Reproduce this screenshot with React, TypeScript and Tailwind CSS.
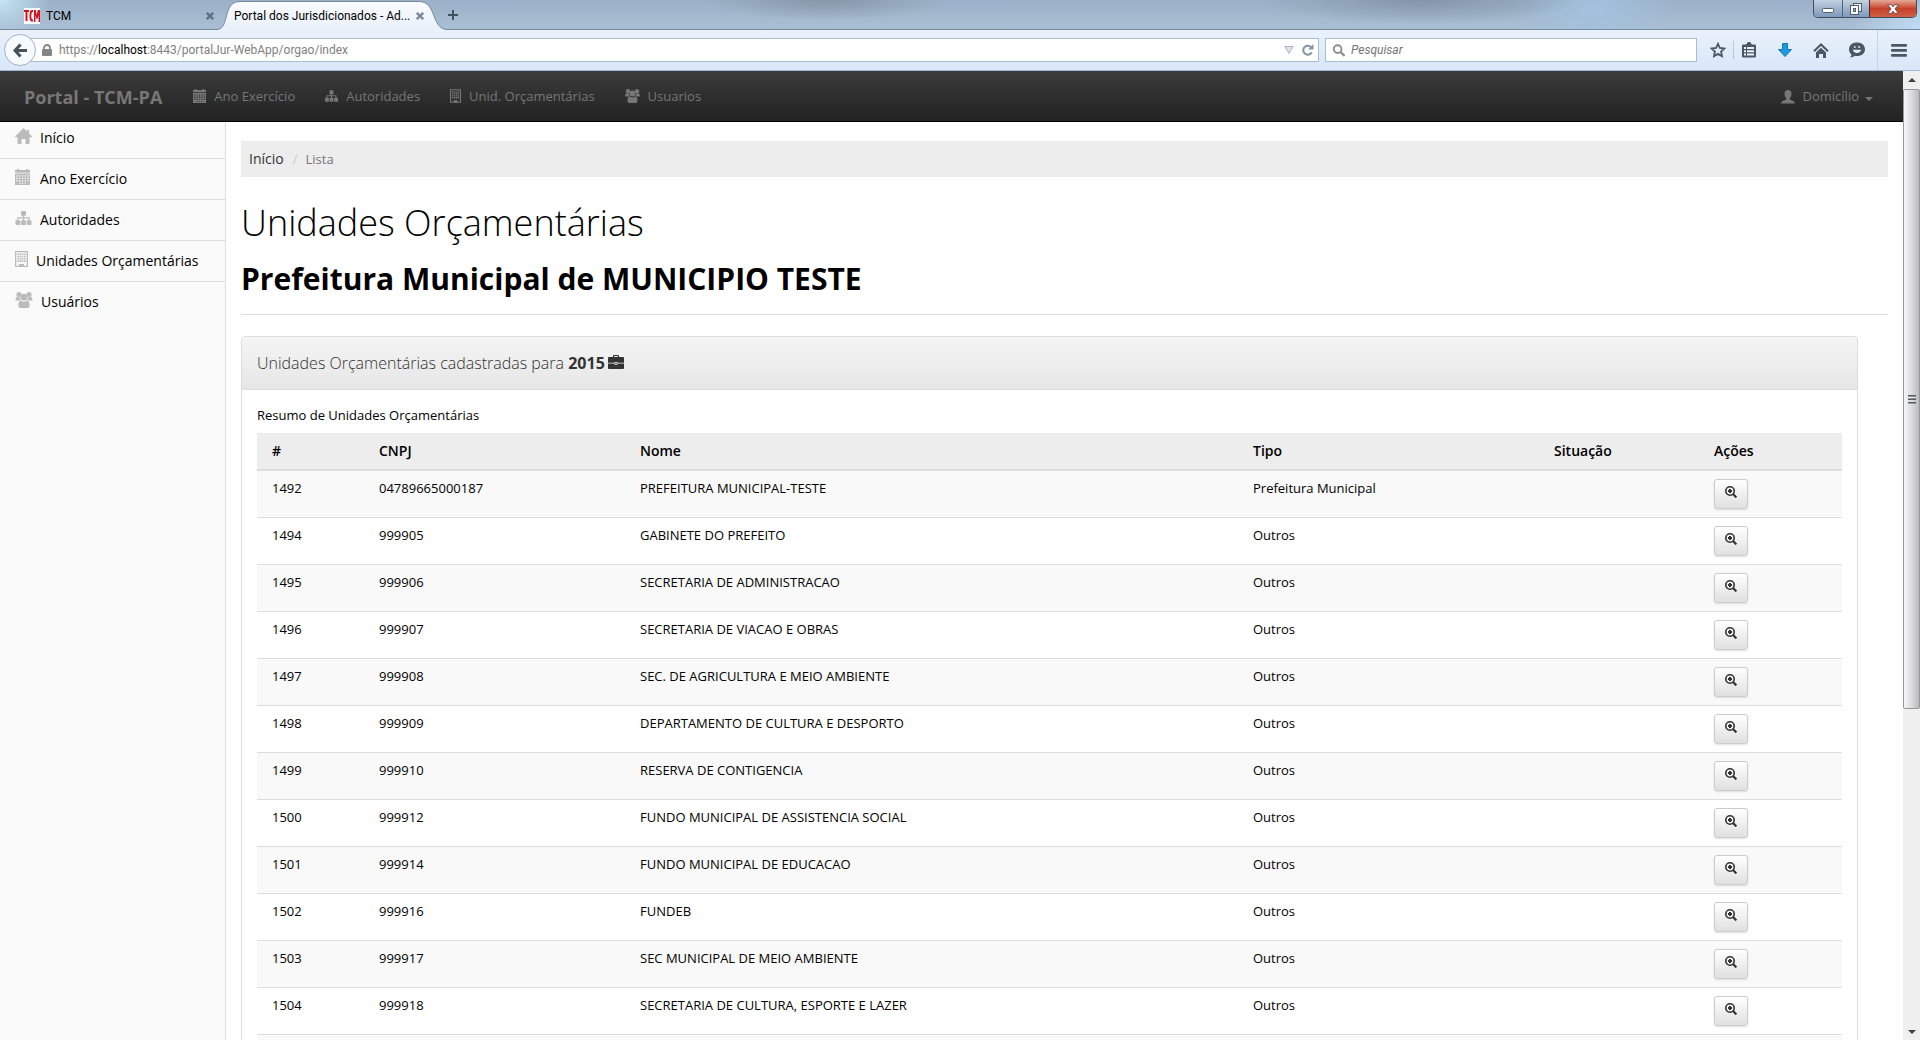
import { type ReactNode } from 'react';

interface IconProps {
  className?: string;
}

// ---- Icons --------------------------------------------------------------

function CalendarIcon({ className }: IconProps) {
  return (
    <svg viewBox="0 0 15 16" className={className} fill="currentColor" aria-hidden="true">
      <path d="M0 1h2V0h2v1h7V0h2v1h2v2.800H0z" />
      <path
        fillRule="evenodd"
        d="M0 4.600h15V16H0zM1.200 6.200v1.200h1.500V6.200zm2.800 0v1.200h1.500V6.200zm2.800 0v1.200h1.500V6.200zm2.800 0v1.200h1.500V6.200zm2.800 0v1.200h1.500V6.200zM1.200 8.700v1.200h1.500V8.700zm2.800 0v1.200h1.500V8.700zm2.800 0v1.200h1.500V8.700zm2.800 0v1.200h1.500V8.700zm2.800 0v1.200h1.500V8.700zM1.200 11.200v1.200h1.500v-1.200zm2.800 0v1.200h1.500v-1.200zm2.800 0v1.200h1.500v-1.200zm2.800 0v1.200h1.500v-1.200zm2.800 0v1.200h1.500v-1.200zM4 13.700v1h1.500v-1zm2.800 0v1h1.500v-1zm2.800 0v1h1.500v-1z"
      />
    </svg>
  );
}

function SitemapIcon({ className }: IconProps) {
  return (
    <svg viewBox="0 0 16 14" className={className} fill="currentColor" aria-hidden="true">
      <rect x="5.500" y="0" width="5" height="4.700" rx="0.700" />
      <rect x="0" y="9.300" width="4.800" height="4.700" rx="0.700" />
      <rect x="5.600" y="9.300" width="4.800" height="4.700" rx="0.700" />
      <rect x="11.200" y="9.300" width="4.800" height="4.700" rx="0.700" />
      <path d="M7.400 4h1.200v2.200h5.600V10H13V7.400H8.600V10H7.400V7.400H3V10H1.800V6.200h5.600z" />
    </svg>
  );
}

function BuildingIcon({ className }: IconProps) {
  return (
    <svg viewBox="0 0 13 16" className={className} fill="currentColor" aria-hidden="true">
      <path fillRule="evenodd" d="M0 0h13v16H0zM1.300 1.300v13.400H4V13h5v1.700h2.700V1.300z" />
      <path d="M4.800 13.500h3.400V16H4.800z" />
      {[2.4, 4.7, 7, 9.3].map((y) => (
        <path key={y} d={`M2.400 ${y}h1.600v1.600H2.400zm2.200 0h1.600v1.600H4.600zm2.200 0h1.600v1.600H6.800zm2.200 0h1.600v1.600H9z`} />
      ))}
    </svg>
  );
}

function GroupIcon({ className }: IconProps) {
  return (
    <svg viewBox="0 0 17 16" className={className} fill="currentColor" aria-hidden="true">
      <circle cx="3.400" cy="2.600" r="2.500" />
      <circle cx="13.600" cy="2.600" r="2.500" />
      <circle cx="8.500" cy="5.200" r="3.400" />
      <path d="M0 8.200C0 6 .8 4.800 2 4.800c1 .6 1.800.6 2.400.3C4.500 6.600 5 7.800 5.800 8.500H1.200C.5 8.500 0 8.500 0 8.200z" />
      <path d="M17 8.200c0-2.200-.8-3.400-2-3.400-1 .6-1.800.6-2.400.3-.1 1.500-.6 2.700-1.400 3.400h4.600c.7 0 1.200 0 1.200-.3z" />
      <path d="M2.800 13.500c0-2.500.7-4.800 2.700-4.800 2 1.400 4 1.400 6 0 2 0 2.700 2.300 2.700 4.800 0 1.600-.8 2.500-2.200 2.500H5c-1.400 0-2.200-.9-2.200-2.500z" />
    </svg>
  );
}

function HomeIcon({ className }: IconProps) {
  return (
    <svg viewBox="0 0 17 16" className={className} fill="currentColor" aria-hidden="true">
      <path d="M8.500 0 12 3.300V2h2v3.200l3 3.300-.4.700H14.500V16H10.500v-5h-4v5h-4V9.200H.4L0 8.500z" />
    </svg>
  );
}

function UserIcon({ className }: IconProps) {
  return (
    <svg viewBox="0 0 14 14" className={className} fill="currentColor" aria-hidden="true">
      <path d="M7 0c2.300 0 3.500 1.600 3.500 3.700 0 1.900-.8 3.600-1.700 4.500v1.200c1.500.9 5 1.300 5.200 4.200H0c.2-2.900 3.700-3.300 5.200-4.200V8.200C4.300 7.300 3.500 5.600 3.500 3.700 3.500 1.600 4.700 0 7 0z" />
    </svg>
  );
}

function BriefcaseIcon({ className }: IconProps) {
  return (
    <svg viewBox="0 0 16 14" className={className} fill="currentColor" aria-hidden="true">
      <path d="M5 2V.9C5 .3 5.300 0 5.900 0h4.200c.6 0 .9.300.9.900V2h3.800c.8 0 1.200.4 1.200 1.200V7.800H9.500V7h-3v.8H0V3.200C0 2.400.4 2 1.200 2zm1.200 0h3.600V1.100H6.200z" />
      <path d="M0 8.600h6.200c.2.900.8 1.300 1.800 1.300s1.600-.4 1.800-1.300H16v4.200c0 .8-.4 1.200-1.200 1.200H1.200C.4 14 0 13.600 0 12.800z" />
      <path d="M7 7.700h2v1H7z" />
    </svg>
  );
}

function ZoomInIcon({ className }: IconProps) {
  return (
    <svg viewBox="0 0 12 12" className={className} fill="none" stroke="currentColor" aria-hidden="true">
      <circle cx="5" cy="5" r="4.200" strokeWidth="1.600" />
      <path d="M8 8l3.400 3.400" strokeWidth="2.200" />
      <path d="M5 3v4M3 5h4" strokeWidth="2" />
    </svg>
  );
}

function CloseMark({ className }: IconProps) {
  return (
    <svg viewBox="0 0 8 8" className={className} fill="none" stroke="currentColor" strokeWidth="2.400" aria-hidden="true">
      <path d="M.8.8l6.400 6.400M7.200.8.8 7.200" />
    </svg>
  );
}

// ---- Data ---------------------------------------------------------------

const NAV_ITEMS: { label: string; icon: ReactNode }[] = [
  { label: 'Ano Exercício', icon: <CalendarIcon className="h-[14px] w-[13px]" /> },
  { label: 'Autoridades', icon: <SitemapIcon className="h-[12px] w-[13px]" /> },
  { label: 'Unid. Orçamentárias', icon: <BuildingIcon className="h-[14px] w-[11px]" /> },
  { label: 'Usuarios', icon: <GroupIcon className="h-[14px] w-[15px]" /> },
];

const SIDE_ITEMS: { label: string; icon: ReactNode }[] = [
  { label: 'Início', icon: <HomeIcon className="h-4 w-[17px]" /> },
  { label: 'Ano Exercício', icon: <CalendarIcon className="mr-0.5 h-4 w-[15px]" /> },
  { label: 'Autoridades', icon: <SitemapIcon className="h-[14px] w-[17px]" /> },
  { label: 'Unidades Orçamentárias', icon: <BuildingIcon className="h-4 w-[13px]" /> },
  { label: 'Usuários', icon: <GroupIcon className="h-4 w-[18px]" /> },
];

interface Unit {
  id: string;
  cnpj: string;
  name: string;
  type: string;
}

const UNITS: Unit[] = [
  { id: '1492', cnpj: '04789665000187', name: 'PREFEITURA MUNICIPAL-TESTE', type: 'Prefeitura Municipal' },
  { id: '1494', cnpj: '999905', name: 'GABINETE DO PREFEITO', type: 'Outros' },
  { id: '1495', cnpj: '999906', name: 'SECRETARIA DE ADMINISTRACAO', type: 'Outros' },
  { id: '1496', cnpj: '999907', name: 'SECRETARIA DE VIACAO E OBRAS', type: 'Outros' },
  { id: '1497', cnpj: '999908', name: 'SEC. DE AGRICULTURA E MEIO AMBIENTE', type: 'Outros' },
  { id: '1498', cnpj: '999909', name: 'DEPARTAMENTO DE CULTURA E DESPORTO', type: 'Outros' },
  { id: '1499', cnpj: '999910', name: 'RESERVA DE CONTIGENCIA', type: 'Outros' },
  { id: '1500', cnpj: '999912', name: 'FUNDO MUNICIPAL DE ASSISTENCIA SOCIAL', type: 'Outros' },
  { id: '1501', cnpj: '999914', name: 'FUNDO MUNICIPAL DE EDUCACAO', type: 'Outros' },
  { id: '1502', cnpj: '999916', name: 'FUNDEB', type: 'Outros' },
  { id: '1503', cnpj: '999917', name: 'SEC MUNICIPAL DE MEIO AMBIENTE', type: 'Outros' },
  { id: '1504', cnpj: '999918', name: 'SECRETARIA DE CULTURA, ESPORTE E LAZER', type: 'Outros' },
];

// ---- Browser frame ------------------------------------------------------

function TabStrip() {
  return (
    <div className="flex h-[30px] shrink-0 items-start border-b border-[#7289a0] bg-[radial-gradient(ellipse_50px_34px_at_0px_0px,#c4e6f5,transparent),radial-gradient(ellipse_70px_40px_at_100%_100%,#bfdcf5,transparent),radial-gradient(ellipse_120px_20px_at_43%_0px,#8697a8,transparent),radial-gradient(ellipse_160px_24px_at_74%_0px,#8496a8,transparent),radial-gradient(ellipse_80px_50px_at_83%_30%,#a2c2de,transparent),linear-gradient(#9bb0c8,#abbfd3)] text-[12px] leading-[30px] text-black">
      <button className="flex h-[30px] w-[217px] items-center pt-px pr-[3px] pl-6 text-left">
        <svg viewBox="0 0 16 16" className="h-4 w-4" aria-hidden="true">
          <rect width="16" height="16" fill="#fff" />
          <path d="M0 2h5v2H3.500v9h-2V4H0zM8 2C6 2 5.500 5 5.500 8S6 13.500 8 13.500h1v-2c-1.500 0-1.700-1.500-1.700-3.500s.2-4 1.700-4V2zM10 14V2h1.800l1 5 1-5H16v12h-1.500V7l-1 4h-1l-1-4v7z" fill="#d8101c" />
        </svg>
        <span className="ml-1.5 flex-1">TCM</span>
        <CloseMark className="h-2 w-2 text-[#61707f]" />
      </button>
      <button className="relative flex h-[30px] w-[230px] items-center pt-px pl-[17px] text-left">
        <svg viewBox="0 0 230 30" className="absolute inset-0 h-[30px] w-[230px]" aria-hidden="true">
          <defs>
            <linearGradient id="tabFill" x1="0" y1="0" x2="0" y2="1">
              <stop offset="0" stopColor="#fafcff" />
              <stop offset="1" stopColor="#e9f0fb" />
            </linearGradient>
          </defs>
          <path
            d="M0 29.500C13 29 5 1.500 23 1.500H202C220 1.500 214 29 230 29.500V30H0z"
            fill="url(#tabFill)"
          />
          <path d="M0 29.500C13 29 5 1.500 23 1.500H202C220 1.500 214 29 230 29.500" fill="none" stroke="#7289a0" />
        </svg>
        <span className="relative w-[182px] whitespace-nowrap">Portal dos Jurisdicionados - Ad...</span>
        <CloseMark className="relative h-2 w-2 text-[#7d8b98]" />
      </button>
      <button aria-label="Nova aba" className="flex h-[30px] w-3 items-center justify-center">
        <svg viewBox="0 0 10 10" className="h-2.5 w-2.5 shrink-0" stroke="#44525f" strokeWidth="2" aria-hidden="true">
          <path d="M5 0v10M0 5h10" />
        </svg>
      </button>
      <div className="mr-[3px] ml-auto flex h-[18px] overflow-hidden rounded-b-[5px] border border-t-0 border-[#3f4f63]">
        <button aria-label="Minimizar" className="flex w-7 items-end justify-center bg-linear-to-b from-[#c3d1e1] via-[#9fb4cd] to-[#7f9abb] pb-1">
          <svg viewBox="0 0 12 5" className="h-[5px] w-3" aria-hidden="true">
            <rect x=".5" y=".5" width="11" height="4" rx="1" fill="#fff" stroke="#4f5d70" />
          </svg>
        </button>
        <button aria-label="Restaurar" className="flex w-[27px] items-center justify-center border-l border-[#54657a] bg-linear-to-b from-[#c3d1e1] via-[#9fb4cd] to-[#7f9abb]">
          <svg viewBox="0 0 12 12" className="h-3 w-3" stroke="#4f5d70" aria-hidden="true">
            <rect x="3.500" y=".5" width="8" height="8" fill="#eee" />
            <rect x=".5" y="2.500" width="8" height="9" fill="#fff" />
            <rect x="3.500" y="5.500" width="2" height="3" fill="#a9b9cc" />
          </svg>
        </button>
        <button aria-label="Fechar" className="flex w-[47px] items-center justify-center border-l border-[#54262a] bg-linear-to-b from-[#e3a896] via-[#c7402a] to-[#cf5f45]">
          <svg viewBox="0 0 12 10" className="h-2.5 w-3" fill="#fff" stroke="#5b3a40" strokeWidth=".8" aria-hidden="true">
            <path d="M.6.6h3.400l2 2.200 2-2.200h3.400L8 5l3.400 4.400H8L6 7.200 4 9.400H.6L4 5z" />
          </svg>
        </button>
      </div>
    </div>
  );
}

function Toolbar() {
  return (
    <div className="flex h-[41px] shrink-0 items-center border-b border-[#9fbbd3] bg-linear-to-b from-[#e9f1fb] to-[#d9e7f8] pl-1 text-[12px] text-[#4b5864]">
      <button
        aria-label="Voltar"
        className="z-10 flex h-8 w-8 shrink-0 items-center justify-center rounded-full border border-[#9fb2c6] bg-[#f7fafe]"
      >
        <svg viewBox="0 0 14 14" className="h-[15px] w-[14px]" fill="none" stroke="#46525e" strokeWidth="3" aria-hidden="true">
          <path d="M7.500 1 2 7l5.500 6M2.500 7H14" />
        </svg>
      </button>
      <div className="-ml-1.5 flex h-6 flex-1 items-center border border-[#a9bdd2] bg-white pr-1 pl-[11px]">
        <svg viewBox="0 0 10 12" className="h-3 w-2.5" aria-hidden="true">
          <path d="M2 6V4a3 3 0 0 1 6 0v2" fill="none" stroke="#858585" strokeWidth="1.800" />
          <rect y="5" width="10" height="7" rx="1" fill="#858585" />
        </svg>
        <div className="ml-[7px] grid flex-1 items-center">
          <span className="col-start-1 row-start-1 text-[#808080]">
            https://<span className="text-black">localhost</span>:8443/portalJur-WebApp/orgao/index
          </span>
          <input aria-label="Endereço" className="col-start-1 row-start-1 w-full bg-transparent outline-none" />
        </div>
        <svg viewBox="0 0 10 8" className="mr-2 h-2 w-2.5" aria-hidden="true">
          <path d="M.8.500h8.400L5 7.500z" fill="#dce3ea" stroke="#a9b6c3" />
        </svg>
        <button aria-label="Recarregar">
          <svg viewBox="0 0 12 12" className="h-3 w-3" fill="none" stroke="#8494a5" strokeWidth="2" aria-hidden="true">
            <path d="M9.800 8.200A4.500 4.500 0 1 1 9 3" />
            <path d="M11.500 0v5.500H6z" fill="#8494a5" stroke="none" />
          </svg>
        </button>
      </div>
      <div className="ml-1.5 flex h-6 w-[372px] items-center border border-[#a9bdd2] bg-white px-1.5">
        <svg viewBox="0 0 14 14" className="h-[13px] w-[14px]" fill="none" stroke="#8d8d8d" strokeWidth="2" aria-hidden="true">
          <circle cx="5.500" cy="5.500" r="4.200" />
          <path d="M8.500 8.500 13 13" strokeWidth="2.400" />
        </svg>
        <input
          aria-label="Pesquisar"
          placeholder="Pesquisar"
          className="ml-[5px] flex-1 outline-none placeholder:text-[#757575] placeholder:italic"
        />
      </div>
      <div className="flex h-full items-center">
        <button aria-label="Favoritar" className="ml-[13px]">
          <svg viewBox="0 0 16 16" className="h-4 w-4" fill="none" stroke="currentColor" strokeWidth="1.800" aria-hidden="true">
            <path d="M8 1.800l1.900 4.200 4.600.5-3.400 3.100.9 4.600L8 11.900l-4 2.300.9-4.600L1.500 6.500l4.600-.5z" />
          </svg>
        </button>
        <span className="ml-[7px] h-[18px] w-px bg-[#b7c6d8]" />
        <button aria-label="Lista de favoritos" className="ml-2">
          <svg viewBox="0 0 14 16" className="h-4 w-[14px]" aria-hidden="true">
            <path d="M1.500 2.500H4L6 0h2l2 2.500h2.500c1 0 1.500.5 1.500 1.500v10c0 1-.5 1.500-1.500 1.500h-11C.5 15.500 0 15 0 14V4c0-1 .5-1.500 1.500-1.500z" fill="currentColor" />
            <path d="M2 5h2v2H2zm3 0h7v2H5zM2 8.200h2v2H2zm3 0h7v2H5zM2 11.400h2v2H2zm3 0h7v2H5z" fill="#e8f0fa" />
          </svg>
        </button>
        <button aria-label="Downloads" className="ml-[22px]">
          <svg viewBox="0 0 14 14" className="h-[14px] w-[14px]" aria-hidden="true">
            <path d="M4.500.5h5v6h4L7 13.500.5 6.500h4z" fill="#1b9ae0" stroke="#1177b3" />
          </svg>
        </button>
        <button aria-label="Página inicial" className="ml-[21px]">
          <svg viewBox="0 0 16 15" className="h-[15px] w-4" fill="none" stroke="currentColor" aria-hidden="true">
            <path d="M1 8.200 8 1.500l7 6.700" strokeWidth="2" />
            <path d="M3 9.500l5-4.700 5 4.700V15h-3v-4H6v4H3z" fill="currentColor" stroke="none" />
          </svg>
        </button>
        <button aria-label="Conversa" className="ml-5">
          <svg viewBox="0 0 16 16" className="h-4 w-4" aria-hidden="true">
            <path d="M8 .5c4.500 0 8 2.700 8 6.700S12.500 14 8 14c-.8 0-1.600-.1-2.300-.3C4.500 15 2.800 15.500 1 15.300c1-.8 1.500-1.800 1.400-2.900C.9 11.100 0 9.300 0 7.200 0 3.200 3.500.5 8 .5z" fill="currentColor" />
            <path d="M5.200 4h1.300v2H5.200zm4.300 0h1.300v2H9.500zM3.800 7.800h8.400C11.800 9.800 10.300 11 8 11S4.200 9.800 3.800 7.800z" fill="#e8f0fa" />
          </svg>
        </button>
        <span className="ml-3 h-full w-px bg-[#c5d4e6]" />
        <button aria-label="Menu" className="mr-[13px] ml-[13px]">
          <svg viewBox="0 0 16 13" className="h-[13px] w-4" fill="currentColor" aria-hidden="true">
            <rect width="16" height="2.800" rx="1" />
            <rect y="5" width="16" height="2.800" rx="1" />
            <rect y="10" width="16" height="2.800" rx="1" />
          </svg>
        </button>
      </div>
    </div>
  );
}

function ScrollBar() {
  return (
    <div className="flex w-[17px] shrink-0 flex-col bg-[#f0f0f0]" aria-hidden="true">
      <svg viewBox="0 0 17 17" className="h-[18px] w-[17px]" fill="#404040">
        <path d="M5 10.500h8L9 6.500z" />
      </svg>
      <div className="flex h-[64%] items-center justify-center rounded-[2px] border border-[#979797] bg-linear-to-r from-[#f5f5f5] via-[#dcdcdd] to-[#b9babd]">
        <svg viewBox="0 0 8 9" className="h-[9px] w-2" fill="#55595e">
          <path d="M0 0h8v1.500H0zM0 3.500h8V5H0zM0 7h8v1.500H0z" />
        </svg>
      </div>
      <svg viewBox="0 0 17 17" className="mt-auto h-[17px] w-[17px]" fill="#404040">
        <path d="M5 7h8l-4 4z" />
      </svg>
    </div>
  );
}

// ---- Portal page --------------------------------------------------------

function NavBar() {
  return (
    <header className="flex h-[51px] shrink-0 items-center border-b border-black bg-linear-to-b from-[#3c3c3c] to-[#222222] px-6 pt-0.5 text-[13px] text-[#777777]">
      <a href="#" className="mr-4 text-[18px] font-bold">
        Portal - TCM-PA
      </a>
      <nav className="flex">
        {NAV_ITEMS.map((item) => (
          <a key={item.label} href="#" className="flex items-center gap-2 px-[15px]">
            <span className="pb-0.5">{item.icon}</span>
            {item.label}
          </a>
        ))}
      </nav>
      <a href="#" className="mr-1.5 ml-auto flex items-center">
        <UserIcon className="mr-2 h-[14px] w-[14px]" />
        Domicílio
        <svg viewBox="0 0 8 4" className="mt-1 ml-1.5 h-1 w-2" fill="currentColor" aria-hidden="true">
          <path d="M0 0h8L4 4z" />
        </svg>
      </a>
    </header>
  );
}

function SideBar() {
  return (
    <aside className="w-[226px] shrink-0 border-r border-[#dddddd] bg-[#fafafa] text-[14px] leading-5 text-black">
      <ul className="-mt-1">
        {SIDE_ITEMS.map((item) => (
          <li key={item.label} className="border-b border-[#dddddd] last:border-b-0">
            <a href="#" className="flex items-center gap-2 px-[15px] py-2.5">
              <span className="pb-1 text-[#bbbbbb]">{item.icon}</span>
              {item.label}
            </a>
          </li>
        ))}
      </ul>
    </aside>
  );
}

function UnitsTable() {
  return (
    <table className="mt-2 w-full table-fixed text-left text-[13px] leading-[18px] text-black">
      <colgroup>
        <col className="w-[107px]" />
        <col className="w-[261px]" />
        <col />
        <col className="w-[301px]" />
        <col className="w-[160px]" />
        <col className="w-[143px]" />
      </colgroup>
      <thead>
        <tr className="h-[37px] border-b-2 border-[#dddddd] bg-[#ededed]">
          {['#', 'CNPJ', 'Nome', 'Tipo', 'Situação', 'Ações'].map((head) => (
            <th key={head} className="px-[15px] text-[14px] font-semibold">
              {head}
            </th>
          ))}
        </tr>
      </thead>
      <tbody>
        {UNITS.map((unit) => (
          <tr key={unit.id} className="border-b border-[#dddddd] align-top odd:bg-[#f9f9f9]">
            <td className="px-[15px] py-2">{unit.id}</td>
            <td className="px-[15px] py-2">{unit.cnpj}</td>
            <td className="px-[15px] py-2">{unit.name}</td>
            <td className="px-[15px] py-2">{unit.type}</td>
            <td />
            <td className="px-[15px] py-2">
              <button
                aria-label={`Detalhar ${unit.name}`}
                className="flex h-[30px] w-[34px] items-center justify-center rounded-[3px] border border-[#cccccc] bg-linear-to-b from-white to-[#e0e0e0] pb-1 text-[#333333] shadow-[0_1px_2px_rgba(0,0,0,0.12)]"
              >
                <ZoomInIcon className="h-3 w-3" />
              </button>
            </td>
          </tr>
        ))}
        <tr className="h-[47px] bg-[#f9f9f9]">
          <td colSpan={6} />
        </tr>
      </tbody>
    </table>
  );
}

function MainContent() {
  return (
    <main className="min-w-0 flex-1 px-[15px] pt-[19px]">
      <ol className="flex h-9 items-baseline gap-[9px] bg-[#ededed] px-2 pt-2 text-[13px] leading-5 text-[#777777]">
        <li className="text-[14px] text-[#333333]">
          <a href="#">Início</a>
        </li>
        <li className="flex gap-2">
          <span className="text-[#cccccc]">/</span>
          Lista
        </li>
      </ol>

      <div className="border-b border-[#dddddd] pt-[26px] pb-[15px] text-black">
        <h1 className="text-[36px] leading-10 font-light">Unidades Orçamentárias</h1>
        <h2 className="mt-4 text-[30px] leading-10 font-bold">Prefeitura Municipal de MUNICIPIO TESTE</h2>
      </div>

      <section className="mt-[21px] mr-[30px] rounded-[4px] border border-[#dddddd]">
        <h3 className="flex h-[53px] items-center rounded-t-[3px] border-b border-[#dddddd] bg-linear-to-b from-[#f5f5f5] to-[#e6e6e6] px-[15px] text-[16px] font-light text-[#333333]">
          <span>
            Unidades Orçamentárias cadastradas para <strong className="font-bold">2015</strong>
          </span>
          <BriefcaseIcon className="mb-0.5 ml-[3px] h-[14px] w-4" />
        </h3>
        <div className="px-[15px] pt-[15px]">
          <p className="text-[13px] leading-5 text-black">Resumo de Unidades Orçamentárias</p>
          <UnitsTable />
        </div>
      </section>
    </main>
  );
}

export default function App() {
  return (
    <div className="flex h-screen flex-col overflow-hidden bg-white font-['Open_Sans','Noto_Sans',sans-serif]">
      <div className="flex shrink-0 flex-col font-['Roboto','Noto_Sans',sans-serif]">
        <TabStrip />
        <Toolbar />
      </div>
      <div className="flex min-h-0 flex-1">
        <div className="flex min-w-0 flex-1 flex-col overflow-hidden">
          <NavBar />
          <div className="flex min-h-0 flex-1">
            <SideBar />
            <MainContent />
          </div>
        </div>
        <ScrollBar />
      </div>
    </div>
  );
}
